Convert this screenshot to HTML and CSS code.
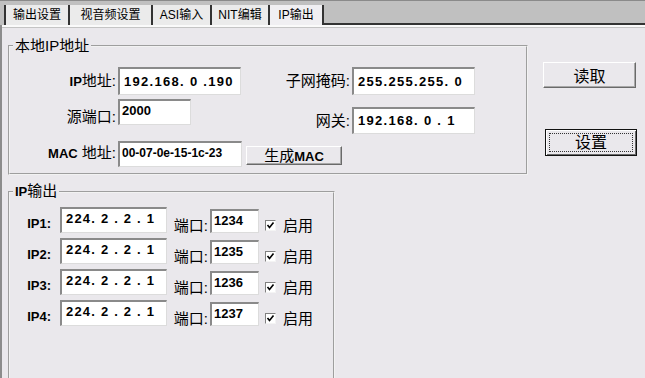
FILE: index.html
```html
<!DOCTYPE html>
<html lang="zh">
  <head>
    <meta charset="UTF-8" />
    <title>IP输出</title>
    <link rel="stylesheet" href="styles.css">
  </head>
  <body>
    <div class="tabbar">
      <div class="tab t1">输出设置</div>
      <div class="tab t2">视音频设置</div>
      <div class="tab t3">ASI输入</div>
      <div class="tab t4">NIT编辑</div>
      <div class="tab t5 active">IP输出</div>
      <div class="tabfill"></div>
    </div>

    <div class="page">
      <div class="groups">
        <fieldset class="group local">
          <legend>本地IP地址</legend>
          <div class="localGrid">
            <div class="lbl r1"><b>IP</b>地址:</div>
            <div class="field ipf r1 w123">192.168. 0 .190</div>
            <div class="lbl r1">子网掩码:</div>
            <div class="field ipf r1 w123">255.255.255. 0</div>

            <div class="lbl r2a">源端口:</div>
            <div class="field r2a w73">2000</div>
            <div class="lbl r2b">网关:</div>
            <div class="field ipf r2b w123">192.168. 0 . 1</div>

            <div class="lbl r3"><b>MAC</b> 地址:</div>
            <div class="field mac r3 w124">00-07-0e-15-1c-23</div>
            <button class="btn genBtn">生成<b>MAC</b></button>
          </div>
        </fieldset>

        <fieldset class="group ipout">
          <legend><b>IP</b>输出</legend>
          <div class="iprows">
            <div class="iprow">
              <div class="ipLbl">IP1:</div>
              <div class="field ipaddr">224. 2 . 2 . 1</div>
              <div class="portLbl">端口:</div>
              <div class="field port">1234</div>
              <span class="check"><svg width="9" height="9" viewBox="0 0 9 9"><path d="M1.5 4 L3.5 6.5 L7.5 1.5" fill="none" stroke="#000" stroke-width="1.6"/></svg></span>
              <span class="enable">启用</span>
            </div>
            <div class="iprow">
              <div class="ipLbl">IP2:</div>
              <div class="field ipaddr">224. 2 . 2 . 1</div>
              <div class="portLbl">端口:</div>
              <div class="field port">1235</div>
              <span class="check"><svg width="9" height="9" viewBox="0 0 9 9"><path d="M1.5 4 L3.5 6.5 L7.5 1.5" fill="none" stroke="#000" stroke-width="1.6"/></svg></span>
              <span class="enable">启用</span>
            </div>
            <div class="iprow">
              <div class="ipLbl">IP3:</div>
              <div class="field ipaddr">224. 2 . 2 . 1</div>
              <div class="portLbl">端口:</div>
              <div class="field port">1236</div>
              <span class="check"><svg width="9" height="9" viewBox="0 0 9 9"><path d="M1.5 4 L3.5 6.5 L7.5 1.5" fill="none" stroke="#000" stroke-width="1.6"/></svg></span>
              <span class="enable">启用</span>
            </div>
            <div class="iprow">
              <div class="ipLbl">IP4:</div>
              <div class="field ipaddr">224. 2 . 2 . 1</div>
              <div class="portLbl">端口:</div>
              <div class="field port">1237</div>
              <span class="check"><svg width="9" height="9" viewBox="0 0 9 9"><path d="M1.5 4 L3.5 6.5 L7.5 1.5" fill="none" stroke="#000" stroke-width="1.6"/></svg></span>
              <span class="enable">启用</span>
            </div>
          </div>
        </fieldset>
      </div>

      <div class="actions">
        <button class="btn readBtn">读取</button>
        <button class="btn setBtn"><span class="focus">设置</span></button>
      </div>
    </div>
  </body>
</html>
```

FILE: styles.css
```css
html,
body {
  margin: 0;
  height: 100%;
  overflow: hidden;
}

body {
  background-color: #eae8ec;
  font-family: "Liberation Sans", "Noto Sans CJK SC", sans-serif;
  color: #000;
}

/* Tab strip */
.tabbar {
  display: flex;
  align-items: flex-end;
  height: 24px;
  padding-left: 4px;
  background-color: #c0c0c0;
  border-top: 1px solid #8a8a8a;
}

.tab {
  height: 20px;
  line-height: 20px;
  box-sizing: border-box;
  border-left: 2px solid #333;
  background-color: #ebebeb;
  font-size: 12px;
  text-align: center;
}

.t1 {
  width: 64px;
}
.t2 {
  width: 83px;
}
.t3 {
  width: 59px;
}
.t4 {
  width: 58px;
}
.t5 {
  width: 56px;
  border-right: 2px solid #333;
}

.tab.active {
  background-color: #f0eff2;
}

.tabfill {
  flex: 1;
  height: 2px;
  background-color: #333;
}

/* Page */
.page {
  display: flex;
  height: calc(100% - 25px);
  overflow: hidden;
  border-left: 2px solid #8c8c8c;
  box-shadow: inset 0 2px 0 #fafafa, inset 0 3px 0 #c4c4c4;
}

.groups {
  display: flex;
  flex-direction: column;
  flex-shrink: 0;
  width: 526px;
}

.group {
  margin: 0 0 0 6px;
  padding: 0;
  border: 2px groove #f2f2f2;
}

.group legend {
  margin-left: 3px;
  padding: 0 2px;
  font-size: 15px;
  line-height: 16px;
}

.group legend b,
.lbl b,
.btn b {
  font-weight: bold;
  font-size: 13px;
}

.local {
  width: 520px;
  box-sizing: border-box;
  margin-top: 13px;
  padding-bottom: 6px;
}

.ipout {
  flex-shrink: 0;
  width: 327px;
  box-sizing: border-box;
  height: 230px;
  margin-top: 8px;
}

/* Local IP grid */
.localGrid {
  display: grid;
  grid-template-columns: 108px 124px 110px 123px;
  align-items: start;
}

.lbl {
  font-size: 15px;
  text-align: right;
  padding-right: 2px;
  white-space: nowrap;
}

.field {
  box-sizing: border-box;
  background-color: #fff;
  border-style: solid;
  border-width: 2px 1px 1px 2px;
  border-color: #8a8a8a #dcdcdc #dcdcdc #8a8a8a;
  font-size: 13px;
  font-weight: bold;
  line-height: 16px;
  white-space: pre;
  padding: 2px 2px 0;
}

.ipf {
  letter-spacing: 1.3px;
  padding-left: 4px;
}

.mac {
  font-size: 12px;
}

.w123 {
  width: 123px;
}
.w124 {
  width: 124px;
}
.w73 {
  width: 73px;
}

.lbl.r1,
.field.r1 {
  margin-top: 13px;
  height: 28px;
}
.lbl.r1 {
  line-height: 28px;
}
.field.r1 {
  padding-top: 5px;
}

.lbl.r2a,
.field.r2a {
  margin-top: 4px;
  height: 26px;
}
.lbl.r2a {
  line-height: 16px;
  padding-top: 10px;
  box-sizing: border-box;
}

.lbl.r2b,
.field.r2b {
  margin-top: 12px;
  height: 27px;
}
.lbl.r2b {
  line-height: 27px;
}
.field.r2b {
  padding-top: 4px;
}

.lbl.r3,
.field.r3 {
  margin-top: 7px;
  height: 26px;
}
.lbl.r3 {
  line-height: 24px;
}

/* Buttons */
.btn {
  box-sizing: border-box;
  padding: 0;
  background-color: #eae8ec;
  border: 1px solid;
  border-color: #fff #6a6a6a #6a6a6a #fff;
  box-shadow: inset -1px -1px 0 #a8a8a8;
  font-family: "Liberation Sans", "Noto Sans CJK SC", sans-serif;
  font-size: 15px;
  color: #000;
  cursor: pointer;
}

.genBtn {
  margin: 12px 0 0 4px;
  width: 96px;
  height: 19px;
  line-height: 15px;
}

.actions {
  display: flex;
  flex-direction: column;
  align-items: flex-start;
  margin-left: 15px;
  padding-top: 37px;
}

.readBtn {
  width: 93px;
  height: 26px;
  font-size: 16px;
}

.setBtn {
  margin: 41px 0 0 2px;
  width: 92px;
  height: 27px;
  padding: 3px;
  font-size: 16px;
  border: 1px solid #111;
  box-shadow: inset 1px 1px 0 #fff, inset -1px -1px 0 #6a6a6a;
}

.setBtn .focus {
  display: block;
  height: 100%;
  box-sizing: border-box;
  border: 1px dotted #333;
  line-height: 17px;
}

/* IP output rows */
.iprows {
  display: flex;
  flex-direction: column;
  gap: 5px;
  margin-top: 7px;
}

.iprow {
  display: flex;
  align-items: flex-end;
  height: 26px;
}

.ipLbl {
  width: 50px;
  box-sizing: border-box;
  padding-right: 9px;
  text-align: right;
  font-size: 13px;
  font-weight: bold;
  line-height: 16px;
  margin-bottom: 1px;
}

.ipaddr {
  width: 107px;
  height: 26px;
  letter-spacing: 1.2px;
  padding-left: 4px;
}

.portLbl {
  width: 43px;
  box-sizing: border-box;
  padding-right: 2px;
  text-align: right;
  font-size: 15px;
  line-height: 16px;
  margin-bottom: -1px;
}

.port {
  width: 49px;
  height: 24px;
}

.check {
  display: flex;
  align-items: center;
  justify-content: center;
  width: 11px;
  height: 11px;
  box-sizing: border-box;
  margin: 0 0 2px 6px;
  background-color: #fff;
  border: 1px solid;
  border-color: #808080 #f4f4f4 #f4f4f4 #808080;
}

.enable {
  margin-left: 7px;
  font-size: 15px;
  line-height: 16px;
  margin-bottom: -1px;
}
```
